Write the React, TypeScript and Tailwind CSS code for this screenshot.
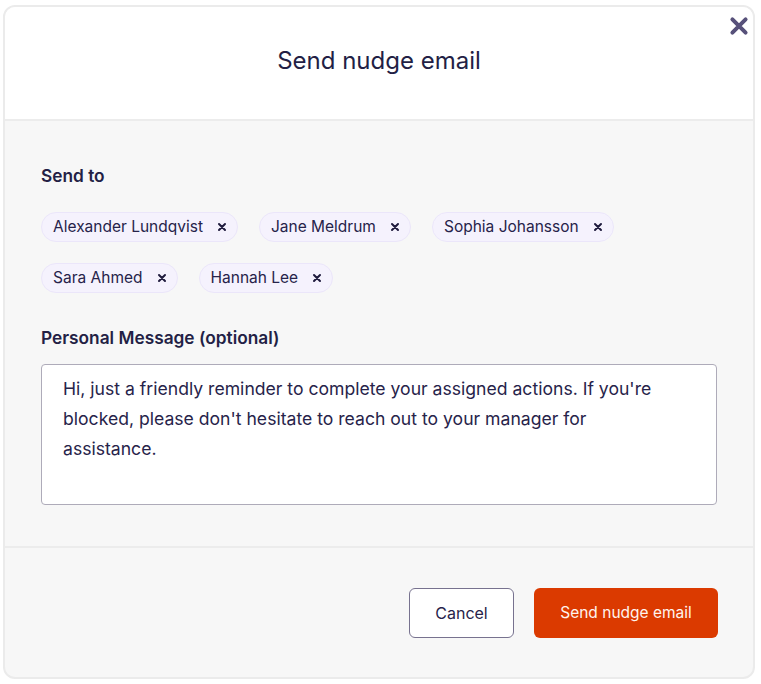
import React from 'react';

const recipients = ['Alexander Lundqvist', 'Jane Meldrum', 'Sophia Johansson', 'Sara Ahmed', 'Hannah Lee'];

const message =
  "Hi, just a friendly reminder to complete your assigned actions. If you're blocked, please don't hesitate to reach out to your manager for assistance.";

const CloseIcon: React.FC<{ size: number; stroke: number; className?: string }> = ({ size, stroke, className }) => (
  <svg width={size} height={size} viewBox="0 0 20 20" className={className} fill="none">
    <path d="M4 4L16 16M16 4L4 16" stroke="currentColor" strokeWidth={stroke} strokeLinecap="round" />
  </svg>
);

const Chip: React.FC<{ name: string }> = ({ name }) => (
  <div className="flex h-[30px] items-center gap-[14px] rounded-full border border-[#ebe6fa] bg-[#f5f2fd] pl-[11px] pr-[10px] text-[15.5px] text-[#27234a]">
    <span>{name}</span>
    <CloseIcon size={10} stroke={4} className="text-[#1f1b3d]" />
  </div>
);

const App: React.FC = () => {
  return (
    <div className="h-[684px] w-[761px] bg-white pl-[3px] pt-[5px] font-['Inter',sans-serif]">
      <div className="flex h-[674px] w-[752px] flex-col overflow-hidden rounded-[12px] border-2 border-[#ebebeb] bg-[#f7f7f7]">
        <div className="relative flex h-[114px] shrink-0 items-center justify-center border-b-2 border-[#ececec] bg-white pb-[4px]">
          <h2 className="text-[24px] text-[#231f45]">Send nudge email</h2>
          <button className="absolute right-[3px] top-[8px] text-[#57517a]">
            <CloseIcon size={22} stroke={3.6} />
          </button>
        </div>

        <div className="flex flex-col border-b-2 border-[#ececec] px-[36px] pb-[41px] pt-[43px]">
          <h3 className="text-[17.3px] leading-[24px] font-semibold text-[#231f45]">Send to</h3>
          <div className="mt-[24px] flex flex-wrap gap-x-[21px] gap-y-[21px]">
            {recipients.map((r) => (
              <Chip key={r} name={r} />
            ))}
          </div>
          <h3 className="mt-[33px] text-[17.3px] leading-[24px] font-semibold text-[#231f45]">Personal Message (optional)</h3>
          <textarea
            readOnly
            defaultValue={message}
            className="mt-[14px] h-[141px] w-full resize-none rounded-[4px] border border-[#aeabb9] bg-white py-[9px] pl-[21px] pr-[40px] text-[17.6px] leading-[30px] text-[#27234a] outline-none"
          />
        </div>

        <div className="flex flex-1 items-start justify-end gap-[20px] px-[35px] pt-[40px]">
          <button className="h-[50px] w-[105px] rounded-[6px] border-[1.5px] border-[#77728f] bg-white text-[16px] text-[#27234a]">
            Cancel
          </button>
          <button className="h-[50px] w-[184px] rounded-[6px] bg-[#db3a00] text-[15.5px] text-[#fff4ee]">
            Send nudge email
          </button>
        </div>
      </div>
    </div>
  );
};

export default App;
